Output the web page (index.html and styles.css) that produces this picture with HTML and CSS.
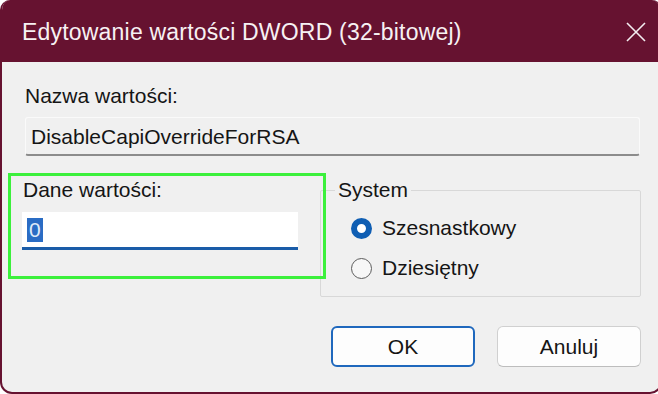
FILE: index.html
```html
<!DOCTYPE html>
<html lang="pl">
  <head>
    <meta charset="UTF-8" />
    <meta name="viewport" content="width=device-width, initial-scale=1.0" />
    <title>Edytowanie wartości DWORD</title>
    <link rel="stylesheet" href="styles.css">
  </head>
  <body>
    <div class="window">
      <div class="titlebar">
        <span class="title">Edytowanie wartości DWORD (32-bitowej)</span>
        <svg class="close" width="20" height="20" viewBox="0 0 20 20">
          <path d="M1 1 L19 19 M19 1 L1 19" stroke="#f4eef1" stroke-width="1.6" fill="none" />
        </svg>
      </div>

      <div class="content">
        <div class="name-section">
          <div class="label">Nazwa wartości:</div>
          <div class="name-box">DisableCapiOverrideForRSA</div>
        </div>

        <div class="row">
          <div class="data">
            <div class="label">Dane wartości:</div>
            <div class="value-input"><span class="selected">0</span></div>
          </div>

          <fieldset class="system">
            <legend>System</legend>
            <div class="radio-row">
              <span class="radio checked"></span>
              <span>Szesnastkowy</span>
            </div>
            <div class="radio-row second">
              <span class="radio"></span>
              <span>Dziesiętny</span>
            </div>
          </fieldset>

          <!-- highlight drawn over the screenshot -->
          <div class="highlight"></div>
        </div>

        <div class="buttons">
          <button class="default">OK</button>
          <button>Anuluj</button>
        </div>
      </div>
    </div>
  </body>
</html>
```

FILE: styles.css
```css
body {
  margin: 0;
  background-color: #ffffff;
  font-family: "Liberation Sans", Arial, sans-serif;
  color: #151515;
  overflow: hidden;
}

.window {
  width: 662px;
  height: 394px;
  box-sizing: border-box;
  border: 2px solid #661230;
  border-top: none;
  border-radius: 10px 10px 12px 12px;
  background-color: #f0f0f0;
  overflow: hidden;
  display: flex;
  flex-direction: column;
}

.titlebar {
  height: 62px;
  flex-shrink: 0;
  background-color: #661230;
  color: #f7f1f3;
  display: flex;
  align-items: center;
  justify-content: space-between;
  padding: 1px 16px 0 22px;
  box-sizing: border-box;
  margin: 0 -2px;
}

.title {
  font-size: 23px;
  line-height: 26px;
  letter-spacing: 0.2px;
}

.content {
  padding: 22px 19px 0 20px;
  font-size: 21px;
  line-height: 24px;
}

.name-section {
  margin: 0 1px 0 3px;
}

.name-box {
  margin-top: 9px;
  height: 39px;
  box-sizing: border-box;
  padding: 7px 5px 0;
  border: 1px solid #fafafa;
  border-bottom: 2px solid #8c8c8c;
  border-radius: 3px;
}

.row {
  position: relative;
  display: flex;
  margin-top: 22px;
}

.data {
  width: 276px;
  flex-shrink: 0;
}

.data .label {
  padding-left: 1px;
}

.value-input {
  margin-top: 10px;
  height: 38px;
  box-sizing: border-box;
  padding: 6px 5px 0;
  background-color: #ffffff;
  border-bottom: 3px solid #1a5ca8;
}

.selected {
  display: inline-block;
  background-color: #2a6cc4;
  color: #dfeaf8;
  padding: 0 2px;
}

.system {
  flex: 1;
  margin: 0 0 0 22px;
  padding: 14px 0 16px 30px;
  border: 1px solid #d8d8d8;
  border-radius: 2px;
  min-width: 0;
}

.system legend {
  margin-left: -16px;
  padding: 0 3px;
}

.radio-row {
  display: flex;
  align-items: center;
  gap: 10px;
}

.radio-row.second {
  margin-top: 16px;
}

.radio {
  width: 21px;
  height: 21px;
  box-sizing: border-box;
  border-radius: 50%;
  border: 1.5px solid #5c5c5c;
  background-color: #f7f7f7;
}

.radio.checked {
  border: 6.5px solid #0f5eb3;
  background-color: #ffffff;
}

.highlight {
  position: absolute;
  left: -14px;
  top: -5px;
  width: 318px;
  height: 106px;
  box-sizing: border-box;
  border: 3px solid #3cf03c;
}

.buttons {
  display: flex;
  justify-content: flex-end;
  gap: 22px;
  margin-top: 29px;
}

button {
  width: 144px;
  height: 41px;
  font-family: "Liberation Sans", Arial, sans-serif;
  font-size: 21px;
  color: #151515;
  background-color: #fdfdfd;
  border: 1px solid #d0d0d0;
  border-bottom-color: #bdbdbd;
  border-radius: 6px;
}

button.default {
  border: 2px solid #1f68bd;
}
```
